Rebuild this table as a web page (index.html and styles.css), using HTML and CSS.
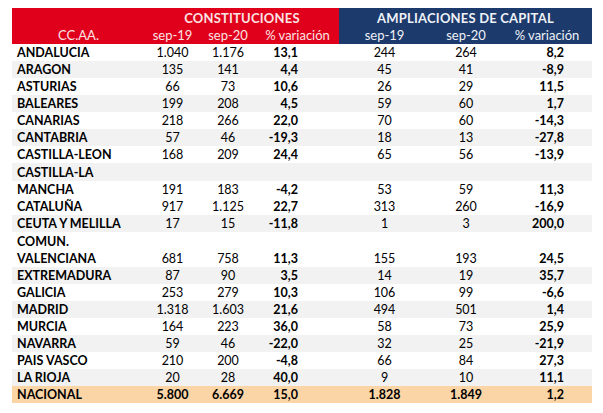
FILE: index.html
```html
<!DOCTYPE html>
<html lang="es">
<head>
<meta charset="utf-8">
<title>Constituciones y ampliaciones</title>
<link rel="stylesheet" href="styles.css">
</head>
<body>
<table class="tbl">
  <colgroup>
    <col class="c-name"><col class="c-a"><col class="c-b"><col class="c-c">
    <col class="c-d"><col class="c-e"><col class="c-f">
  </colgroup>
  <thead>
    <tr class="h1">
      <th class="red"></th>
      <th class="red group" colspan="3">CONSTITUCIONES</th>
      <th class="blue group" colspan="3">AMPLIACIONES DE CAPITAL</th>
    </tr>
    <tr class="h2">
      <th class="red">CC.AA.</th>
      <th class="red">sep-19</th>
      <th class="red">sep-20</th>
      <th class="red">% variación</th>
      <th class="blue">sep-19</th>
      <th class="blue">sep-20</th>
      <th class="blue">% variación</th>
    </tr>
  </thead>
  <tbody>
    <tr><td class="name">ANDALUCIA</td><td>1.040</td><td>1.176</td><td class="pa">13,1</td><td>244</td><td>264</td><td class="pb">8,2</td></tr>
    <tr class="alt"><td class="name">ARAGON</td><td>135</td><td>141</td><td class="pa">4,4</td><td>45</td><td>41</td><td class="pb">-8,9</td></tr>
    <tr><td class="name">ASTURIAS</td><td>66</td><td>73</td><td class="pa">10,6</td><td>26</td><td>29</td><td class="pb">11,5</td></tr>
    <tr class="alt"><td class="name">BALEARES</td><td>199</td><td>208</td><td class="pa">4,5</td><td>59</td><td>60</td><td class="pb">1,7</td></tr>
    <tr><td class="name">CANARIAS</td><td>218</td><td>266</td><td class="pa">22,0</td><td>70</td><td>60</td><td class="pb">-14,3</td></tr>
    <tr class="alt"><td class="name">CANTABRIA</td><td>57</td><td>46</td><td class="pa">-19,3</td><td>18</td><td>13</td><td class="pb">-27,8</td></tr>
    <tr><td class="name">CASTILLA-LEON</td><td>168</td><td>209</td><td class="pa">24,4</td><td>65</td><td>56</td><td class="pb">-13,9</td></tr>
    <tr class="tall half"><td class="name">CASTILLA-LA<br>MANCHA</td><td>191</td><td>183</td><td class="pa">-4,2</td><td>53</td><td>59</td><td class="pb">11,3</td></tr>
    <tr><td class="name">CATALUÑA</td><td>917</td><td>1.125</td><td class="pa">22,7</td><td>313</td><td>260</td><td class="pb">-16,9</td></tr>
    <tr class="alt"><td class="name">CEUTA Y MELILLA</td><td>17</td><td>15</td><td class="pa">-11,8</td><td>1</td><td>3</td><td class="pb">200,0</td></tr>
    <tr class="tall"><td class="name">COMUN.<br>VALENCIANA</td><td>681</td><td>758</td><td class="pa">11,3</td><td>155</td><td>193</td><td class="pb">24,5</td></tr>
    <tr class="alt"><td class="name">EXTREMADURA</td><td>87</td><td>90</td><td class="pa">3,5</td><td>14</td><td>19</td><td class="pb">35,7</td></tr>
    <tr><td class="name">GALICIA</td><td>253</td><td>279</td><td class="pa">10,3</td><td>106</td><td>99</td><td class="pb">-6,6</td></tr>
    <tr class="alt"><td class="name">MADRID</td><td>1.318</td><td>1.603</td><td class="pa">21,6</td><td>494</td><td>501</td><td class="pb">1,4</td></tr>
    <tr><td class="name">MURCIA</td><td>164</td><td>223</td><td class="pa">36,0</td><td>58</td><td>73</td><td class="pb">25,9</td></tr>
    <tr class="alt"><td class="name">NAVARRA</td><td>59</td><td>46</td><td class="pa">-22,0</td><td>32</td><td>25</td><td class="pb">-21,9</td></tr>
    <tr><td class="name">PAIS VASCO</td><td>210</td><td>200</td><td class="pa">-4,8</td><td>66</td><td>84</td><td class="pb">27,3</td></tr>
    <tr class="alt"><td class="name">LA RIOJA</td><td>20</td><td>28</td><td class="pa">40,0</td><td>9</td><td>10</td><td class="pb">11,1</td></tr>
    <tr class="total"><td class="name">NACIONAL</td><td>5.800</td><td>6.669</td><td class="pa">15,0</td><td>1.828</td><td>1.849</td><td class="pb">1,2</td></tr>
  </tbody>
</table>
</body>
</html>
```
FILE: styles.css
```css
html, body {
  background: #ffffff;
}
body {
  margin: 8px 0 0 12px;
  font-family: "Lato", "Liberation Sans", sans-serif;
  font-size: 12.5px;
  color: #000;
}
.tbl {
  border-collapse: collapse;
  table-layout: fixed;
  width: 580px;
}
.c-name { width: 133px; }
.c-a { width: 55px; }
.c-b { width: 56px; }
.c-c { width: 83px; }
.c-d { width: 91px; }
.c-e { width: 72px; }
.c-f { width: 90px; }

.tbl th, .tbl td {
  padding: 0;
  white-space: nowrap;
  overflow: hidden;
}
.tbl th {
  height: 18px;
  line-height: 18px;
  font-weight: 400;
  font-size: 13px;
  text-align: center;
  vertical-align: middle;
}
.tbl th.group { font-weight: 700; letter-spacing: 0.2px; }
.h1 th { vertical-align: bottom; line-height: 16px; }
.h2 th { vertical-align: middle; }
.red { background: #e0001b; color: #fbe3e3; }
.blue { background: #1c3a6b; color: #eef1f7; }

.tbl td {
  height: 17px;
  line-height: 17px;
  text-align: center;
  vertical-align: bottom;
}
.tbl td.name {
  text-align: left;
  padding-left: 5px;
  font-weight: 700;
}
.tbl td.pa {
  text-align: right;
  padding-right: 41px;
  font-weight: 700;
}
.tbl td.pb {
  text-align: right;
  padding-right: 28px;
  font-weight: 700;
}
.tbl tr.alt td { background: #f2f2f2; }
.tbl tr.tall td { height: 35px; }
.tbl tr.half td {
  background: linear-gradient(#f2f2f2 0, #f2f2f2 18px, #ffffff 18px);
}
.tbl tr.total td { background: #fcd5a6; font-weight: 700; }
```
